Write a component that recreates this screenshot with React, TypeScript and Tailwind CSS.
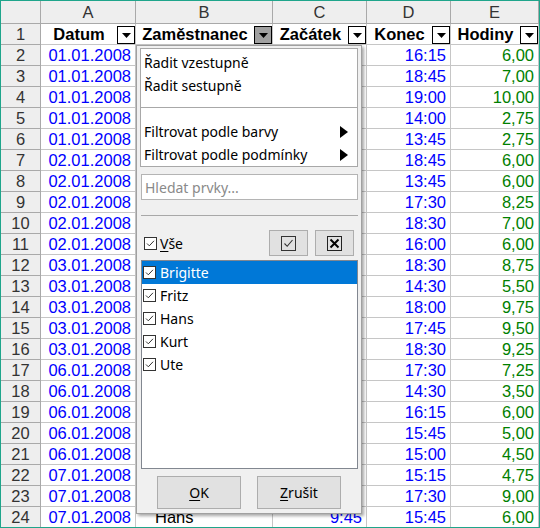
import React from 'react';

type Row = [string, string, string, string, string];

// columns B and C sit under the open filter popup, so only the last row shows them
const rows: Row[] = [
  ['01.01.2008', '', '', '16:15', '6,00'],
  ['01.01.2008', '', '', '18:45', '7,00'],
  ['01.01.2008', '', '', '19:00', '10,00'],
  ['01.01.2008', '', '', '14:00', '2,75'],
  ['01.01.2008', '', '', '13:45', '2,75'],
  ['02.01.2008', '', '', '18:45', '6,00'],
  ['02.01.2008', '', '', '13:45', '6,00'],
  ['02.01.2008', '', '', '17:30', '8,25'],
  ['02.01.2008', '', '', '18:30', '7,00'],
  ['02.01.2008', '', '', '16:00', '6,00'],
  ['03.01.2008', '', '', '18:30', '8,75'],
  ['03.01.2008', '', '', '14:30', '5,50'],
  ['03.01.2008', '', '', '18:00', '9,75'],
  ['03.01.2008', '', '', '17:45', '9,50'],
  ['03.01.2008', '', '', '18:30', '9,25'],
  ['06.01.2008', '', '', '17:30', '7,25'],
  ['06.01.2008', '', '', '14:30', '3,50'],
  ['06.01.2008', '', '', '16:15', '6,00'],
  ['06.01.2008', '', '', '15:45', '5,00'],
  ['06.01.2008', '', '', '15:00', '4,50'],
  ['07.01.2008', '', '', '15:15', '4,75'],
  ['07.01.2008', '', '', '17:30', '9,00'],
  ['07.01.2008', 'Hans', '9:45', '15:45', '6,00'],
];

const widths = ['w-[40px]', 'w-[95px]', 'w-[137px]', 'w-[94px]', 'w-[84px]', 'w-[88px]'];
const hdr = 'bg-[#eeeeee] border-r border-b border-[#a9a9a9] text-[#333333] flex items-center justify-center';
const cell = 'border-r border-b border-[#c6c6c6] flex items-center';

const FilterButton = ({ active }: { active?: boolean }) => (
  <div
    className={`w-[18px] h-[18px] mt-[2px] border border-black flex items-center justify-center ${
      active ? 'bg-[#a0a0a0]' : 'bg-white'
    }`}
  >
    <svg width="9" height="5" viewBox="0 0 9 5">
      <path d="M0 0H9L4.5 5Z" fill="#000" />
    </svg>
  </div>
);

const HeadCell = ({ label, w, active }: { label: string; w: string; active?: boolean }) => (
  <div className={`${w} ${cell} bg-white`}>
    <div className="flex-1 text-center font-bold text-black">{label}</div>
    <FilterButton active={active} />
  </div>
);

const Check = () => (
  <svg width="13" height="13" viewBox="0 0 13 13" className="shrink-0">
    <rect x="0.5" y="0.5" width="12" height="12" fill="#fff" stroke="#333" />
    <path d="M3 6.5L5.3 8.8L10 3.8" fill="none" stroke="#333" strokeWidth="1" />
  </svg>
);

const MenuItem = ({ label, arrow }: { label: string; arrow?: boolean }) => (
  <div className="h-[23px] pl-[3px] pr-[9px] flex items-center justify-between">
    <span>{label}</span>
    {arrow && (
      <svg width="8" height="12" viewBox="0 0 8 12">
        <path d="M0 0L8 6L0 12Z" fill="#000" />
      </svg>
    )}
  </div>
);

const names = ['Brigitte', 'Fritz', 'Hans', 'Kurt', 'Ute'];

const AutoFilter = () => (
  <div className="absolute left-[135px] top-[44px] w-[226px] h-[469px] bg-[#f0f0f0] border border-[#a0a0a0] shadow-[2px_2px_3px_rgba(0,0,0,0.35)] font-['Noto_Sans',sans-serif] text-[14px] leading-normal text-black flex flex-col">
    <div className="ml-[3px] mt-[2px] w-[218px] bg-white border border-[#a8a8a8] pt-[2px]">
      <MenuItem label="Řadit vzestupně" />
      <MenuItem label="Řadit sestupně" />
      <div className="mt-[10px] mb-[12px] h-px bg-[#a8a8a8]" />
      <MenuItem label="Filtrovat podle barvy" arrow />
      <MenuItem label="Filtrovat podle podmínky" arrow />
    </div>
    <div className="ml-[4px] mt-[7px] w-[217px] h-[26px] bg-white border border-[#b4b4b4] pl-[3px] flex items-center text-[#8a8a8a]">
      Hledat prvky...
    </div>
    <div className="ml-[4px] mt-[15px] w-[217px] h-px bg-[#a8a8a8]" />
    <div className="mt-[14px] h-[26px] pl-[7px] pr-[7px] flex items-center">
      <Check />
      <span className="ml-[3px] underline-offset-2">
        <span className="underline">V</span>še
      </span>
      <div className="ml-auto flex gap-[7px]">
        <div className="w-[39px] h-[26px] bg-[#e1e1e1] border border-[#adadad] flex items-center justify-center">
          <svg width="15" height="15" viewBox="0 0 15 15">
            <rect x="0.5" y="0.5" width="14" height="14" fill="none" stroke="#333" />
            <path d="M3.5 7.5L6.2 10.3L11.5 4" fill="none" stroke="#333" strokeWidth="1.1" />
          </svg>
        </div>
        <div className="w-[39px] h-[26px] bg-[#e1e1e1] border border-[#adadad] flex items-center justify-center">
          <svg width="15" height="15" viewBox="0 0 15 15">
            <rect x="0.5" y="0.5" width="14" height="14" fill="none" stroke="#222" />
            <path d="M3.5 3.5L11.5 11.5M11.5 3.5L3.5 11.5" stroke="#000" strokeWidth="2" />
          </svg>
        </div>
      </div>
    </div>
    <div className="ml-[4px] mt-[4px] w-[217px] h-[209px] bg-white border border-[#828790]">
      {names.map((n, i) => (
        <div
          key={n}
          className={`h-[23px] pl-[1px] flex items-center gap-[4px] ${i === 0 ? 'bg-[#0078d7] text-white' : ''}`}
        >
          <Check />
          <span>{n}</span>
        </div>
      ))}
    </div>
    <div className="mt-[7px] ml-[20px] flex gap-[16px]">
      {['OK', 'Zrušit'].map((b) => (
        <div
          key={b}
          className="w-[84px] h-[33px] bg-[#e1e1e1] border border-[#adadad] flex items-center justify-center"
        >
          <span className="underline-offset-2">
            <span className="underline">{b[0]}</span>
            {b.slice(1)}
          </span>
        </div>
      ))}
    </div>
  </div>
);

export default function App() {
  return (
    <div className="relative w-[540px] h-[528px] overflow-hidden bg-white border border-[#1fa58b] font-['Liberation_Sans',Arial,sans-serif] text-[16.5px] leading-none">
      <div className="flex h-[23px]">
        {['', 'A', 'B', 'C', 'D', 'E'].map((c, i) => (
          <div key={i} className={`${widths[i]} ${hdr}`}>
            {c}
          </div>
        ))}
      </div>
      <div className="flex h-[21px]">
        <div className={`${widths[0]} ${hdr}`}>1</div>
        <HeadCell label="Datum" w={widths[1]} />
        <HeadCell label="Zaměstnanec" w={widths[2]} active />
        <HeadCell label="Začátek" w={widths[3]} />
        <HeadCell label="Konec" w={widths[4]} />
        <HeadCell label="Hodiny" w={widths[5]} />
      </div>
      {rows.map((r, i) => (
        <div key={i} className="flex h-[21px]">
          <div className={`${widths[0]} ${hdr}`}>{i + 2}</div>
          <div className={`${widths[1]} ${cell} justify-end pr-[4px] text-[#0000ff]`}>{r[0]}</div>
          <div className={`${widths[2]} ${cell} pl-[19px] text-black`}>{r[1]}</div>
          <div className={`${widths[3]} ${cell} justify-end pr-[4px] text-[#0000ff]`}>{r[2]}</div>
          <div className={`${widths[4]} ${cell} justify-end pr-[4px] text-[#0000ff]`}>{r[3]}</div>
          <div className={`${widths[5]} ${cell} justify-end pr-[4px] text-[#008000]`}>{r[4]}</div>
        </div>
      ))}
      <AutoFilter />
    </div>
  );
}
